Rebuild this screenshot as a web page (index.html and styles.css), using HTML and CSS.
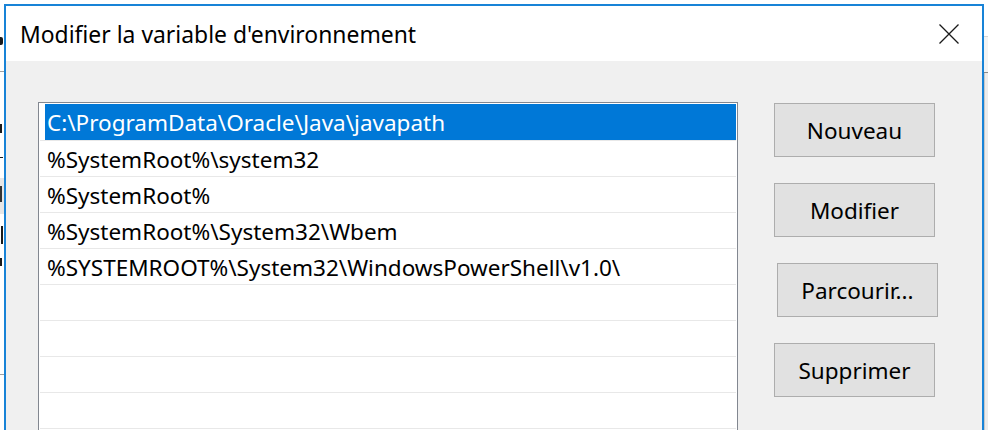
FILE: index.html
```html
<!DOCTYPE html>
<html lang="fr">
<head>
<meta charset="utf-8">
<title>Modifier la variable d'environnement</title>
<link rel="stylesheet" href="styles.css">
</head>
<body>
<div class="desk">
  <div class="bg-left" aria-hidden="true">
    <div class="bit b1"></div>
    <div class="rule r-a"></div>
    <div class="bit b2"></div>
    <div class="bit b3"></div>
    <div class="band"><div class="bit b4"></div></div>
    <div class="bit b5"></div>
    <div class="bit b6"></div>
    <div class="rule r-b"></div>
  </div>
  <div class="dialog">
    <div class="titlebar">
      <span class="title">Modifier la variable d'environnement</span>
      <svg class="close" width="20" height="20" viewBox="0 0 20 20" aria-label="Fermer">
        <path d="M0.5 0.5 L19.5 19.5 M19.5 0.5 L0.5 19.5" stroke="#1a1a1a" stroke-width="1.3" fill="none"/>
      </svg>
    </div>
    <div class="content">
      <ul class="list">
        <li class="sel"><span class="label">C:\ProgramData\Oracle\Java\javapath</span></li>
        <li><span class="label">%SystemRoot%\system32</span></li>
        <li><span class="label">%SystemRoot%</span></li>
        <li><span class="label">%SystemRoot%\System32\Wbem</span></li>
        <li><span class="label">%SYSTEMROOT%\System32\WindowsPowerShell\v1.0\</span></li>
        <li><span class="label"></span></li>
        <li><span class="label"></span></li>
        <li><span class="label"></span></li>
        <li><span class="label"></span></li>
      </ul>
      <div class="buttons">
        <button class="btn">Nouveau</button>
        <button class="btn">Modifier</button>
        <button class="btn shift">Parcourir...</button>
        <button class="btn">Supprimer</button>
      </div>
    </div>
  </div>
  <div class="bg-right" aria-hidden="true">
    <div class="r1"></div>
    <div class="r2"></div>
    <div class="r3"></div>
  </div>
</div>
</body>
</html>
```
FILE: styles.css
```css
html, body {
  margin: 0;
  padding: 0;
  background: #ffffff;
}
body {
  font-family: "Segoe UI", "Noto Sans", "Open Sans", sans-serif;
  color: #000;
}
.desk {
  display: flex;
  width: 988px;
  height: 430px;
  overflow: hidden;
}

/* background window sliver, left */
.bg-left {
  flex: none;
  width: 4px;
  height: 430px;
  overflow: hidden;
  background: #ffffff;
  display: flex;
  flex-direction: column;
}
.bit {
  flex: none;
  width: 2px;
  background: #1a1a1a;
}
.b1 { margin-top: 37px; height: 8px; width: 3px; border-radius: 0 2px 2px 0; }
.rule { flex: none; height: 1px; background: #a0a0a0; }
.r-a { margin-top: 26px; }
.b2 { margin-top: 52px; height: 9px; width: 2px; }
.b3 { margin-top: 24px; height: 1px; width: 3px; }
.band {
  flex: none;
  margin-top: 20px;
  height: 36px;
  background: #e6e6e6;
  display: flex;
  flex-direction: column;
}
.b4 { margin-top: 8px; height: 16px; width: 2px; background: #333; }
.b5 { margin-top: 12px; height: 18px; width: 2px; margin-left: 1px; }
.b6 { margin-top: 14px; height: 8px; width: 2px; }
.r-b { margin-top: 108px; }

/* dialog */
.dialog {
  flex: none;
  box-sizing: border-box;
  width: 980px;
  height: 426px;
  margin-top: 4px;
  border: 2px solid #1883d7;
  border-bottom: none;
  display: flex;
  flex-direction: column;
  overflow: hidden;
}
.titlebar {
  flex: none;
  height: 55px;
  background: #ffffff;
  display: flex;
  align-items: center;
  justify-content: space-between;
  padding-left: 14px;
  padding-right: 23px;
}
.title {
  font-size: 22.9px;
  color: #000;
  position: relative;
  top: 1px;
}
.close {
  display: block;
}
.content {
  flex: 1;
  background: #f0f0f0;
  display: flex;
  align-items: flex-start;
  padding: 41px 0 0 32px;
}
.list {
  flex: none;
  box-sizing: border-box;
  width: 700px;
  height: 400px;
  margin: 0;
  padding: 1px 1px 0 1px;
  list-style: none;
  background: #ffffff;
  border: 1px solid #828790;
}
.list li {
  height: 35px;
  border-bottom: 1px solid #e8e8e8;
  padding-left: 5px;
  display: flex;
}
.list li.sel {
  height: 36px;
}
.label {
  flex: 1;
  padding-left: 2px;
  font-size: 22.5px;
  line-height: 35px;
  white-space: nowrap;
  position: relative;
  top: 1px;
}
.sel .label {
  background: #0078d7;
  color: #ffffff;
  top: 0;
  line-height: 37px;
}
.buttons {
  flex: none;
  display: flex;
  flex-direction: column;
  gap: 26px;
  margin-left: 36px;
  margin-top: 1px;
}
.btn {
  box-sizing: border-box;
  width: 161px;
  height: 54px;
  margin: 0;
  padding: 0;
  border: 1px solid #adadad;
  background: #e1e1e1;
  font-family: inherit;
  font-size: 22.5px;
  color: #000;
}
.btn.shift {
  margin-left: 3px;
}

/* background window sliver, right */
.bg-right {
  flex: none;
  width: 4px;
  height: 430px;
  display: flex;
  flex-direction: column;
}
.r1 {
  height: 36px;
  background: #ffffff;
  border-bottom: 1px solid #d5d5d5;
}
.r2 {
  height: 35px;
  background: #f3f3f3;
  border-bottom: 1px solid #8a8a8a;
}
.r3 {
  flex: 1;
  background: #ececec;
  border-left: 1px solid #c8c8c8;
  box-sizing: border-box;
}
```
